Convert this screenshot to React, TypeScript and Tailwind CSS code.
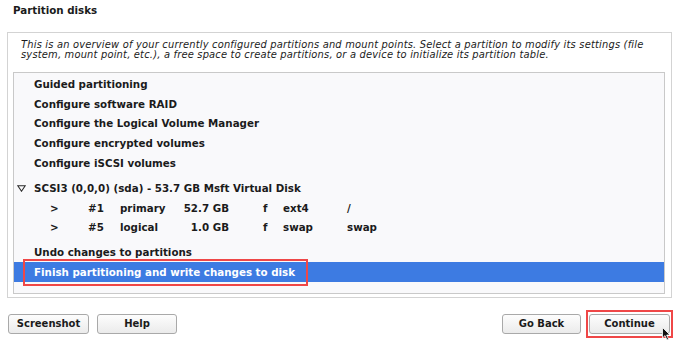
import type { ReactNode } from "react";

const FONT = "font-['DejaVu_Sans',sans-serif]";

const menuGroupOne = [
  "Guided partitioning",
  "Configure software RAID",
  "Configure the Logical Volume Manager",
  "Configure encrypted volumes",
  "Configure iSCSI volumes",
];

const partitions = [
  { num: "#1", kind: "primary", size: "52.7 GB", flag: "f", fs: "ext4", mount: "/" },
  { num: "#5", kind: "logical", size: "1.0 GB", flag: "f", fs: "swap", mount: "swap" },
];

const Row = ({ children, className = "" }: { children: ReactNode; className?: string }) => (
  <div className={`flex h-[19.6px] items-center whitespace-nowrap leading-none ${className}`}>
    {children}
  </div>
);

const Button = ({ label, width, marked }: { label: string; width: string; marked?: boolean }) => (
  <div className="relative flex">
    <button
      type="button"
      className={`${width} block h-[20px] rounded-[3px] border border-[#a9a9a9] bg-gradient-to-b from-[#fdfdfd] to-[#ebebeb] text-[10px] font-bold leading-none text-[#1b1b1b]`}
    >
      {label}
    </button>
    {marked && (
      <div className="pointer-events-none absolute -left-[3px] -top-[4px] h-[28px] w-[87px] border-2 border-[#ef4747]" />
    )}
  </div>
);

export default function App() {
  return (
    <div className={`${FONT} flex h-[343px] w-[679px] flex-col bg-white text-[#1b1b1b]`}>
      <div className="h-[32px] shrink-0 pl-[13px] pt-[4px] text-[10.3px] font-bold leading-[13px]">
        Partition disks
      </div>

      <div className="ml-[7px] flex h-[266px] w-[665px] shrink-0 flex-col border border-[#d3d3d3]">
        <p className="ml-[13px] mt-[6.5px] whitespace-nowrap text-[9.9px] italic leading-[10.5px] tracking-[0.2px]">
          This is an overview of your currently configured partitions and mount points. Select a
          partition to modify its settings (file
          <br />
          system, mount point, etc.), a free space to create partitions, or a device to initialize
          its partition table.
        </p>

        <div className="ml-[5px] mt-auto mb-[3px] h-[222px] w-[652px] shrink-0 border border-[#c9c9c9] bg-[#f9f9fb] pt-[1.6px] text-[10.3px] font-bold">
          {menuGroupOne.map((item) => (
            <Row key={item} className="pl-[20px]">
              {item}
            </Row>
          ))}

          <Row className="mt-[6px] pl-[3px]">
            <svg width="9" height="7" viewBox="0 0 9 7" className="mr-[8px]">
              <path d="M0.8 0.8 H8.2 L4.5 6.2 Z" fill="none" stroke="#2a2a2a" strokeWidth="1.1" />
            </svg>
            SCSI3 (0,0,0) (sda) - 53.7 GB Msft Virtual Disk
          </Row>

          {partitions.map((p) => (
            <Row key={p.num} className="pl-[36px]">
              <span className="w-[38px]">&gt;</span>
              <span className="w-[32px]">{p.num}</span>
              <span className="w-[58px]">{p.kind}</span>
              <span className="w-[51px] text-right">{p.size}</span>
              <span className="ml-[34px] w-[20px]">{p.flag}</span>
              <span className="w-[64px]">{p.fs}</span>
              <span>{p.mount}</span>
            </Row>
          ))}

          <Row className="mt-[5.5px] pl-[20px]">Undo changes to partitions</Row>

          <Row className="relative bg-[#3d7be2] pl-[20px] text-white">
            Finish partitioning and write changes to disk
            <div className="pointer-events-none absolute left-[9px] top-[-3px] h-[27px] w-[285px] border-2 border-[#ef4747]" />
          </Row>
        </div>
      </div>

      <div className="mt-[16px] flex items-start px-[8px]">
        <div className="flex gap-[8px]">
          <Button label="Screenshot" width="w-[81px]" />
          <Button label="Help" width="w-[80px]" />
        </div>
        <div className="ml-auto mr-[1px] flex gap-[8px]">
          <Button label="Go Back" width="w-[79px]" />
          <div className="relative">
            <Button label="Continue" width="w-[81px]" marked />
            <svg
              width="9"
              height="14"
              viewBox="0 0 9 14"
              className="pointer-events-none absolute left-[73px] top-[13px]"
            >
              <path d="M0.5 0.5 V11 L3 8.6 L5 13 L6.6 12.3 L4.7 8 H8 Z" fill="#111" stroke="#fff" strokeWidth="0.8" />
            </svg>
          </div>
        </div>
      </div>
    </div>
  );
}
